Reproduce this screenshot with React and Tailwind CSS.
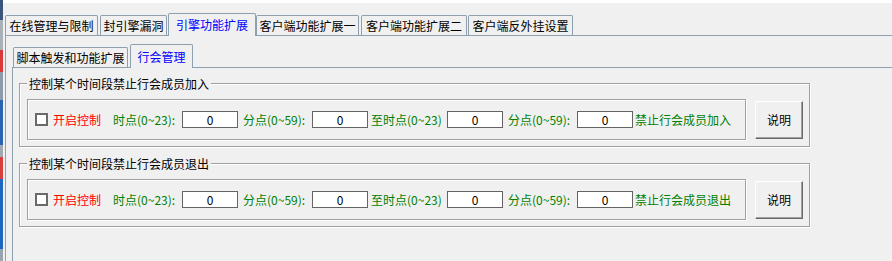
import React from "react";

const line = "border-[#8e9fae]";

function Tab({ label, width, active, ml, tall }) {
  if (active) {
    return (
      <div
        className={`${ml} ${width} ${tall} mb-[-1px] relative z-10 flex items-center justify-center border border-b-0 ${line} rounded-t-[2px] bg-[#f0f0f0] text-[#0000ff] shrink-0`}
      >
        {label}
      </div>
    );
  }
  return (
    <div
      className={`${ml} ${width} h-[20px] flex items-center justify-center border border-b-0 ${line} rounded-t-[2px] bg-[#f0f0f0] text-black shrink-0`}
    >
      {label}
    </div>
  );
}

function Field() {
  return (
    <input
      readOnly
      value="0"
      className="w-[56px] h-[17px] shrink-0 border border-[#646464] bg-white text-center text-[12px] text-black outline-none font-['Noto_Sans_CJK_SC',sans-serif]"
    />
  );
}

function Group({ title, tail, mt }) {
  return (
    <div
      className={`${mt} ml-[6px] w-[791px] h-[64px] border border-[#a0a0a0] shadow-[1px_1px_0_#fff,inset_1px_1px_0_#fff] flex flex-col`}
    >
      <div className="mt-[-8px] ml-[7px] self-start px-[2px] h-[16px] leading-[16px] bg-[#f0f0f0] text-black">
        {title}
      </div>
      <div className="flex items-start mt-[7px] ml-[7px]">
        <div className="w-[719px] h-[41px] border border-[#a0a0a0] shadow-[1px_1px_0_#fff,inset_1px_1px_0_#fff] flex items-center pl-[7px]">
          <span className="w-[13px] h-[13px] shrink-0 border-2 border-[#6a6a6a] bg-white" />
          <span className="ml-[5px] w-[60px] shrink-0 text-[#ff0000]">开启控制</span>
          <span className="w-[69px] shrink-0 text-[#008000]">时点(0~23):</span>
          <Field />
          <span className="ml-[5px] w-[69px] shrink-0 text-[#008000]">分点(0~59):</span>
          <Field />
          <span className="ml-[3px] w-[76px] shrink-0 text-[#008000]">至时点(0~23)</span>
          <Field />
          <span className="ml-[5px] w-[69px] shrink-0 text-[#008000]">分点(0~59):</span>
          <Field />
          <span className="ml-[2px] shrink-0 text-[#008000]">{tail}</span>
        </div>
        <button className="ml-[9px] mt-[2px] w-[48px] h-[38px] border border-t-white border-l-white border-b-[#696969] border-r-[#696969] shadow-[inset_-1px_-1px_0_#a0a0a0] bg-[#f0f0f0] text-black text-[12px] font-['Noto_Sans_CJK_SC',sans-serif]">
          说明
        </button>
      </div>
    </div>
  );
}

export default function App() {
  return (
    <div className="w-[892px] h-[261px] overflow-hidden flex bg-[#f0f0f0] text-[12px] leading-[16px] font-['Noto_Sans_CJK_SC',sans-serif]">
      <div className="w-[3px] shrink-0 flex flex-col">
        <div className="h-[20px] bg-[#3b557a]" />
        <div className="h-[30px] bg-[#a8b0b8]" />
        <div className="h-[22px] bg-[#d83a3a]" />
        <div className="h-[28px] bg-[#8c9cab]" />
        <div className="h-[45px] bg-[#2a64b0]" />
        <div className="h-[12px] bg-[#a0a8b0]" />
        <div className="h-[22px] bg-[#d84040]" />
        <div className="h-[70px] bg-[#1d66c2]" />
        <div className="flex-1 bg-[#9aa4ae]" />
      </div>
      <div className="flex-1 flex flex-col">
        <div className="h-[3px] bg-white" />
        <div className="h-[10px]" />
        <div className="h-[22px] flex items-end">
          <Tab label="在线管理与限制" width="w-[93px]" ml="ml-[2px]" />
          <Tab label="封引擎漏洞" width="w-[67px]" ml="ml-[2px]" />
          <Tab label="引擎功能扩展" width="w-[88px]" ml="ml-[1px]" tall="h-[23px]" active />
          <Tab label="客户端功能扩展一" width="w-[103px]" ml="ml-0" />
          <Tab label="客户端功能扩展二" width="w-[106px]" ml="ml-[2px]" />
          <Tab label="客户端反外挂设置" width="w-[105px]" ml="ml-[1px]" />
        </div>
        <div className={`flex-1 ml-[2px] border-t border-l ${line} flex flex-col pt-[8px]`}>
          <div className="ml-[6px] flex-1 flex flex-col">
            <div className="h-[23px] flex items-end">
              <Tab label="脚本触发和功能扩展" width="w-[115px]" ml="ml-[1px]" />
              <Tab label="行会管理" width="w-[63px]" ml="ml-[2px]" tall="h-[24px]" active />
            </div>
            <div className={`flex-1 border-t border-l ${line} flex flex-col`}>
              <Group title="控制某个时间段禁止行会成员加入" tail="禁止行会成员加入" mt="mt-[15px]" />
              <Group title="控制某个时间段禁止行会成员退出" tail="禁止行会成员退出" mt="mt-[16px]" />
            </div>
          </div>
        </div>
      </div>
    </div>
  );
}
